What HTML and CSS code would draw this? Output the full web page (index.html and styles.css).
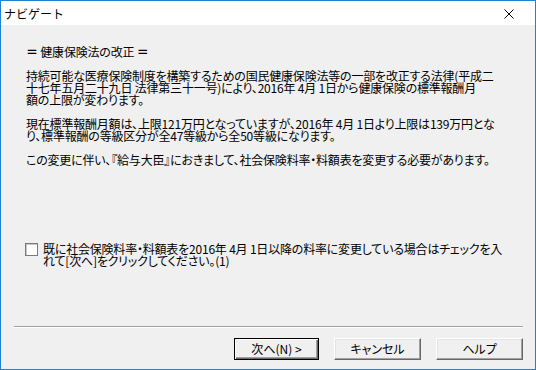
FILE: index.html
```html
<!DOCTYPE html>
<html>
<head>
<meta charset="utf-8">
<title>ナビゲート</title>
<link rel="stylesheet" href="styles.css">
</head>
<body>
<div class="window">
<div class="titlebar">
<span class="title">ナビゲート</span>
<svg class="close" width="10" height="10" viewBox="0 0 10 10"><path d="M0.5 0.5 L9.5 9.5 M9.5 0.5 L0.5 9.5" stroke="#000" stroke-width="1" fill="none"/></svg>
</div>
<div class="client">
<div class="message">
<p class="heading"><b class="eq">＝</b> 健康保険法の改正 <b class="eq">＝</b></p>
<p class="para">持続可能な医療保険制度を構築するための国民健康保険法等の一部を改正する法律(平成二<br>十七年五月二十九日 法律第三十一号)により、2016年 4月 1日から健康保険の標準報酬月<br>額の上限が変わります。</p>
<p class="para">現在標準報酬月額は、上限121万円となっていますが、2016年 4月 1日より上限は139万円とな<br>り、標準報酬の等級区分が全47等級から全50等級になります。</p>
<p class="para">この変更に伴い、『給与大臣』におきまして、社会保険料率・料額表を変更する必要があります。</p>
</div>
<label class="check">
<span class="check-box"></span>
<span class="check-text">既に社会保険料率・料額表を2016年 4月 1日以降の料率に変更している場合はチェックを入<br>れて[次へ]をクリックしてください。(1)</span>
</label>
<div class="spacer"></div>
<div class="separator"></div>
<div class="buttons">
<button class="btn btn-default">次へ(N) &gt;</button>
<button class="btn">キャンセル</button>
<button class="btn">ヘルプ</button>
</div>
</div>
</div>
</body>
</html>
```

FILE: styles.css
```css
/* Navigator dialog */

html, body
{ margin: 0;
padding: 0;
background: #f0f0f0;
}

body
{ font-family: "Noto Sans CJK JP", "Noto Sans", sans-serif;
font-size: 12px;
color: #000;
}

div.window
{ box-sizing: border-box;
width: 536px;
height: 370px;
border: 1px solid #1883d7;
display: flex;
flex-direction: column;
background: #f0f0f0;
}

div.titlebar
{ height: 24px;
background: #fff;
display: flex;
align-items: center;
padding: 0 21px 0 3px;
}

span.title
{ flex: 1;
font-size: 12px;
line-height: 12px;
padding-top: 1px;
}

svg.close
{ display: block;
margin-top: 1px;
}

div.client
{ flex: 1;
display: flex;
flex-direction: column;
padding: 21px 12px 9px 12px;
}

div.message
{ padding-left: 13px;
}

p.heading, p.para
{ margin: 0 0 12px 0;
line-height: 12px;
white-space: nowrap;
font-feature-settings: "palt";
letter-spacing: -0.2px;
}

b.eq
{ font-weight: bold;
}

label.check
{ display: flex;
align-items: flex-start;
gap: 5px;
margin-top: 65px;
padding-left: 12px;
line-height: 12px;
white-space: nowrap;
font-feature-settings: "palt";
letter-spacing: -0.2px;
}

span.check-box
{ box-sizing: border-box;
width: 13px;
height: 13px;
flex: none;
background: #fff;
border: 1px solid #7a7a7a;
box-shadow: inset 1px 1px 0 #c8c8c8;
}

div.spacer
{ flex: 1;
}

div.separator
{ margin-left: 1px;
border-top: 1px solid #a0a0a0;
border-bottom: 1px solid #fff;
height: 0;
margin-bottom: 10px;
}

div.buttons
{ display: flex;
justify-content: flex-end;
gap: 15px;
}

button.btn
{ box-sizing: border-box;
width: 87px;
height: 22px;
padding: 0;
font-family: inherit;
font-size: 12px;
line-height: 12px;
color: #000;
background: #f0f0f0;
border: 1px solid;
border-color: #fff #696969 #696969 #fff;
box-shadow: inset -1px -1px 0 #a0a0a0, inset 1px 1px 0 #e3e3e3;
font-feature-settings: "palt";
}

button.btn-default
{ width: 85px;
border: 1px solid #000;
box-shadow: inset 1px 1px 0 #fff, inset -1px -1px 0 #696969, inset -2px -2px 0 #a0a0a0;
}
```
